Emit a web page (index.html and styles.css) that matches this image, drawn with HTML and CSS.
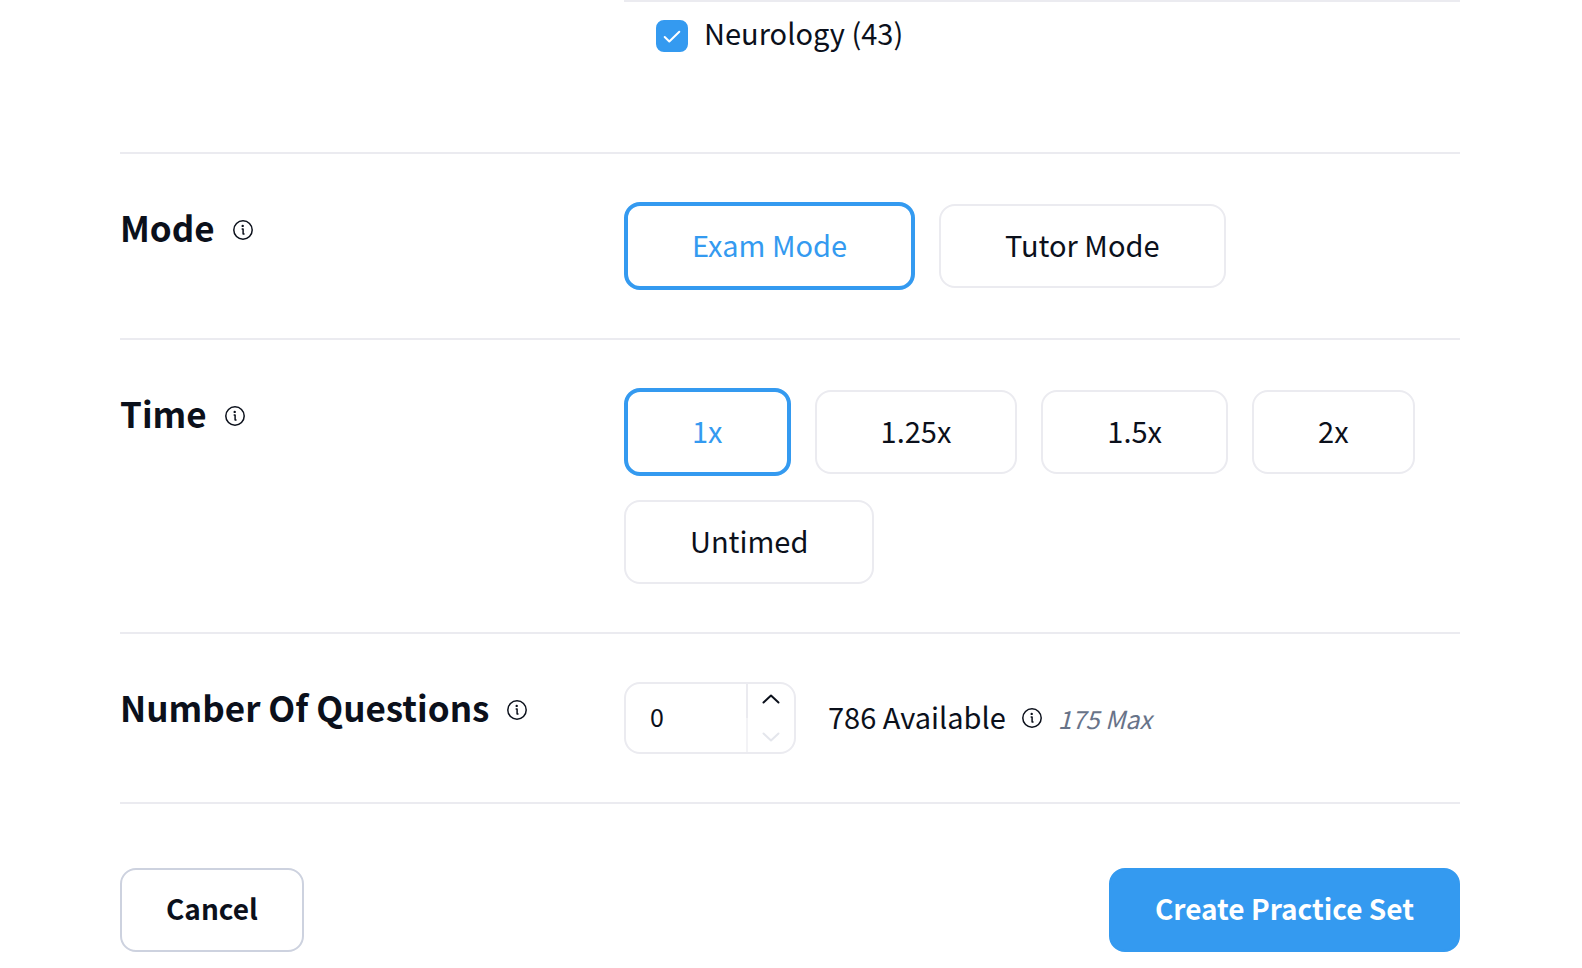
FILE: index.html
```html
<!DOCTYPE html>
<html lang="en">
<head>
    <meta charset="UTF-8">
    <meta name="viewport" content="width=device-width, initial-scale=1.0">
    <title>Create Practice Set</title>
    <link rel="stylesheet" href="styles.css">
</head>
<body>
    <form class="practice-form">
        <div class="row subjects">
            <div class="subject-list">
                <div class="subject">
                    <span class="checkbox">
                        <input type="checkbox" id="neurology" checked>
                        <svg class="check-icon" viewBox="0 0 32 32" aria-hidden="true"><path d="M8.700 17l4.600 4.500L23.300 11.700"/></svg>
                    </span>
                    <label for="neurology">Neurology (43)</label>
                </div>
            </div>
        </div>

        <div class="row">
            <div class="row-title">
                <h2 id="modeTitle">Mode</h2>
                <button type="button" class="info" aria-label="About mode">
                    <svg viewBox="0 0 20 20"><circle cx="10" cy="10" r="9.2"/><path d="M9.200 8.900h.9v5.200h.9"/><circle class="dot" cx="9.700" cy="5.900" r="1.200"/></svg>
                </button>
            </div>
            <div class="options" role="radiogroup" aria-labelledby="modeTitle">
                <label class="option"><input type="radio" name="mode" checked>Exam Mode</label>
                <label class="option"><input type="radio" name="mode">Tutor Mode</label>
            </div>
        </div>

        <div class="row">
            <div class="row-title">
                <h2 id="timeTitle">Time</h2>
                <button type="button" class="info" aria-label="About time">
                    <svg viewBox="0 0 20 20"><circle cx="10" cy="10" r="9.2"/><path d="M9.200 8.900h.9v5.200h.9"/><circle class="dot" cx="9.700" cy="5.900" r="1.200"/></svg>
                </button>
            </div>
            <div class="options" role="radiogroup" aria-labelledby="timeTitle">
                <label class="option"><input type="radio" name="time" checked>1x</label>
                <label class="option"><input type="radio" name="time">1.25x</label>
                <label class="option"><input type="radio" name="time">1.5x</label>
                <label class="option"><input type="radio" name="time">2x</label>
                <label class="option"><input type="radio" name="time">Untimed</label>
            </div>
        </div>

        <div class="row">
            <div class="row-title">
                <h2><label for="questions">Number Of Questions</label></h2>
                <button type="button" class="info" aria-label="About number of questions">
                    <svg viewBox="0 0 20 20"><circle cx="10" cy="10" r="9.2"/><path d="M9.200 8.900h.9v5.200h.9"/><circle class="dot" cx="9.700" cy="5.900" r="1.200"/></svg>
                </button>
            </div>
            <div class="questions">
                <div class="stepper">
                    <input type="number" id="questions" value="0" min="0" max="175">
                    <div class="stepper-buttons">
                        <button type="button" aria-label="Increase">
                            <svg viewBox="0 0 18 10"><path d="M1.500 8.500L9 1.500l7.500 7"/></svg>
                        </button>
                        <button type="button" aria-label="Decrease" disabled>
                            <svg viewBox="0 0 18 10"><path d="M1.500 1.500L9 8.500l7.500-7"/></svg>
                        </button>
                    </div>
                </div>
                <span class="available">786 Available</span>
                <button type="button" class="info" aria-label="About available questions">
                    <svg viewBox="0 0 20 20"><circle cx="10" cy="10" r="9.2"/><path d="M9.200 8.900h.9v5.200h.9"/><circle class="dot" cx="9.700" cy="5.900" r="1.200"/></svg>
                </button>
                <span class="max">175 Max</span>
            </div>
        </div>

        <div class="actions">
            <button type="button" class="button">Cancel</button>
            <button type="submit" class="button primary">Create Practice Set</button>
        </div>
    </form>
</body>
</html>
```
FILE: styles.css
```css
* {
    box-sizing: border-box;
}
body {
    margin: 0;
    background-color: #fff;
    color: #0b101b;
    font-family: "Noto Sans CJK SC", "Open Sans", sans-serif;
    font-size: 29px;
    line-height: 48px;
}
button, input {
    font: inherit;
    color: inherit;
}
button {
    cursor: pointer;
}
svg {
    display: block;
    fill: none;
    stroke: currentColor;
    stroke-linecap: round;
    stroke-linejoin: round;
}
.practice-form {
    padding: 0 122px 16px 120px;
}
.row {
    display: grid;
    grid-template-columns: 504px 1fr;
    align-items: start;
    padding: 48px 0;
    border-bottom: 2px solid #ebebf0;
}
.subjects {
    padding: 0 0 92px;
}
.subject-list {
    grid-column: 2;
    border-top: 2px solid #ebebf0;
}
.subject {
    display: flex;
    gap: 16px;
    padding: 6px 32px 4px;
}
.checkbox {
    display: grid;
    align-content: center;
    padding-top: 8px;
}
.checkbox input {
    grid-area: 1 / 1;
    appearance: none;
    width: 32px;
    height: 32px;
    margin: 0;
    border: 2px solid #cdd2df;
    border-radius: 8px;
}
.checkbox input:checked {
    border-color: #349af0;
    background-color: #349af0;
}
.check-icon {
    grid-area: 1 / 1;
    width: 32px;
    height: 32px;
    color: #fff;
    stroke-width: 2;
    pointer-events: none;
}
.row-title {
    display: flex;
    align-items: center;
    gap: 18px;
}
.row-title h2 {
    margin: 0;
    padding-bottom: 6px;
    font-size: 35px;
    font-weight: 600;
    line-height: 50px;
}
.info {
    padding: 0;
    border: none;
    background: none;
}
.info svg {
    width: 20px;
    height: 20px;
    stroke-width: 1.5;
}
.info .dot {
    fill: currentColor;
    stroke: none;
}
.options {
    display: flex;
    flex-wrap: wrap;
    align-items: center;
    gap: 24px;
}
.option {
    padding: 14px 64px 18px;
    border: 2px solid #ebebf0;
    border-radius: 16px;
    cursor: pointer;
}
.option input {
    appearance: none;
    display: block;
    width: 0;
    height: 0;
    margin: 0;
}
.option:has(input:checked) {
    border: 4px solid #349af0;
    color: #349af0;
}
.questions {
    display: flex;
    align-items: center;
}
.stepper {
    display: flex;
    width: 172px;
    height: 72px;
    margin-right: 32px;
    border: 2px solid #ebebf0;
    border-radius: 16px;
}
.stepper input {
    flex: 1;
    min-width: 0;
    padding: 0 24px 4px;
    border: none;
    background: none;
    font-size: 25px;
    appearance: textfield;
}
.stepper input::-webkit-inner-spin-button {
    appearance: none;
}
.stepper-buttons {
    display: flex;
    flex-direction: column;
    width: 48px;
}
.stepper-buttons button {
    flex: 1;
    display: flex;
    align-items: center;
    justify-content: center;
    padding: 0;
    border: none;
    border-left: 2px solid #ebebf0;
    background: none;
}
.stepper-buttons button:first-child {
    padding-bottom: 4px;
}
.stepper-buttons button:last-child {
    padding-top: 4px;
}
.stepper-buttons button:disabled {
    border-color: #f3f3f6;
    color: #e4e6ec;
    cursor: default;
}
.stepper-buttons svg {
    width: 18px;
    height: 10px;
    stroke-width: 2;
}
.available {
    margin-right: 16px;
    padding-bottom: 4px;
}
.max {
    margin-left: 16px;
    color: #687389;
    font-size: 25px;
    font-style: italic;
}
.actions {
    display: flex;
    justify-content: space-between;
    padding-top: 64px;
}
.button {
    padding: 14px 44px 18px;
    border: 2px solid #cdd2df;
    border-radius: 16px;
    background-color: #fff;
    font-size: 28px;
    font-weight: 600;
}
.primary {
    border-color: #349af0;
    background-color: #349af0;
    color: #fff;
}
```
